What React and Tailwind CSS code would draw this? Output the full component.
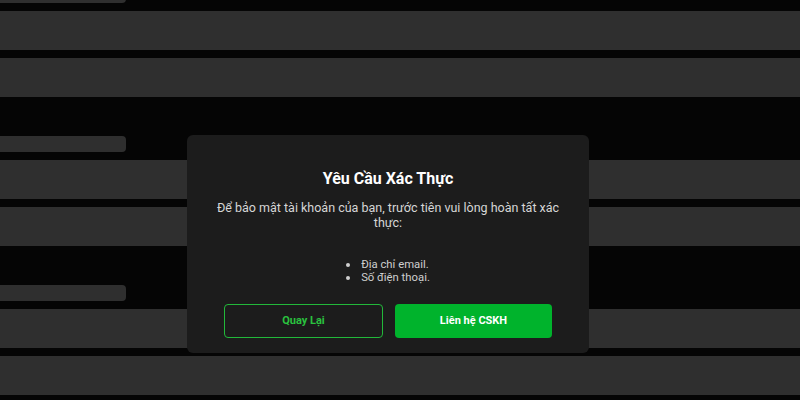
import React from "react";

function Group({ first }) {
  return (
    <div className={`flex flex-col gap-2 ${first ? "-mt-[13px]" : "mt-[39px]"}`}>
      <div className="h-4 w-[126px] rounded-r-[4px] bg-[#2f2f2f]" />
      <div className="h-[39px] w-full bg-[#2f2f2f]" />
      <div className="h-[39px] w-full bg-[#2f2f2f]" />
    </div>
  );
}

export default function App() {
  const items = ["Địa chỉ email.", "Số điện thoại."];
  return (
    <div
      className="relative h-[400px] w-[800px] overflow-hidden bg-[#050505]"
      style={{ fontFamily: "Roboto, 'Noto Sans', sans-serif" }}
    >
      <div className="flex flex-col">
        <Group first />
        <Group />
        <Group />
      </div>

      <div className="absolute left-[187px] top-[135px] flex h-[218px] w-[402px] flex-col items-center rounded-[6px] bg-[#1c1c1c] px-5 pt-[34px] text-center">
        <h2 className="text-[16px] font-bold leading-[19px] text-white">Yêu Cầu Xác Thực</h2>
        <p className="mt-[12px] text-[12.5px] leading-[15px] text-[#d6d6d6]">
          Để bảo mật tài khoản của bạn, trước tiên vui lòng hoàn tất xác thực:
        </p>
        <ul className="mt-[28px] flex flex-col text-left text-[11.3px] leading-[13px] text-[#cfcfcf]">
          {items.map((t) => (
            <li key={t} className="flex items-center">
              <span className="mr-[11px] h-[4px] w-[4px] rounded-full bg-[#cfcfcf]" />
              <span>{t}</span>
            </li>
          ))}
        </ul>
        <div className="mt-[20px] flex w-[328px] gap-3">
          <button className="flex h-[34px] w-[159px] items-center justify-center rounded-[4px] border border-[#22b83a] bg-transparent text-[11px] font-bold text-[#2ac23f]">
            Quay Lại
          </button>
          <button className="flex h-[34px] w-[157px] items-center justify-center rounded-[4px] bg-[#00b32c] text-[11px] font-bold text-white">
            Liên hệ CSKH
          </button>
        </div>
      </div>
    </div>
  );
}
